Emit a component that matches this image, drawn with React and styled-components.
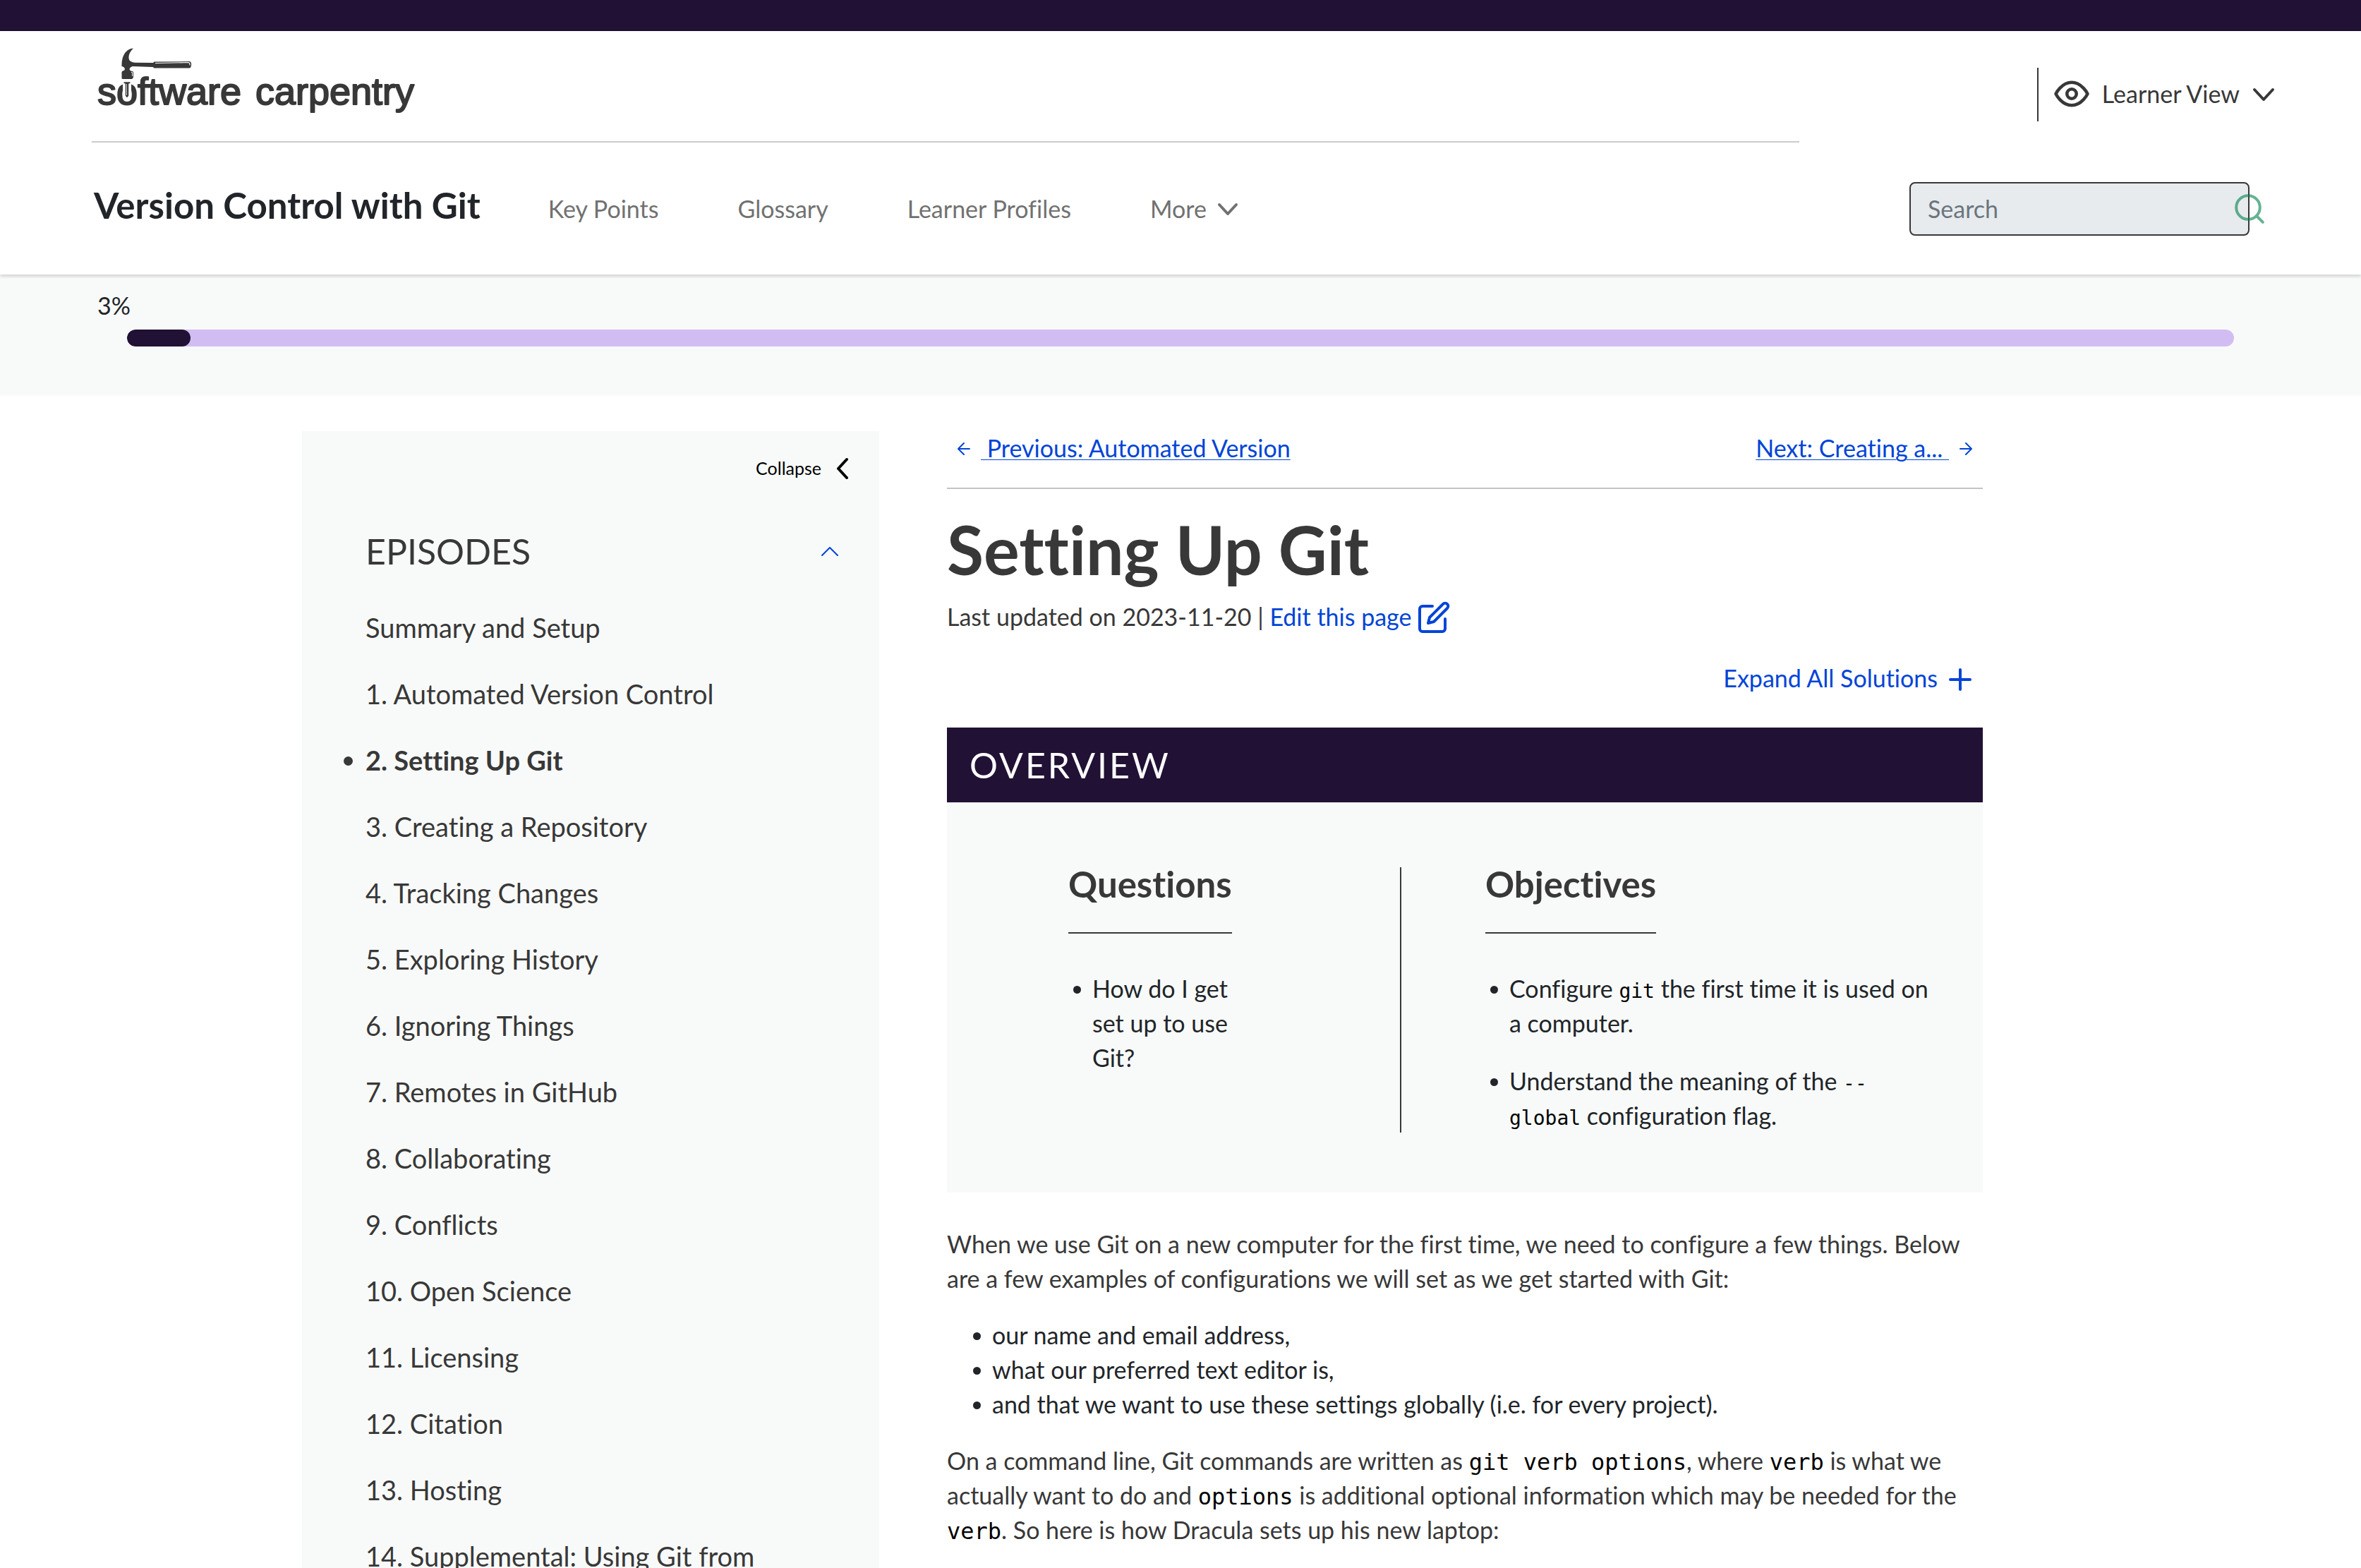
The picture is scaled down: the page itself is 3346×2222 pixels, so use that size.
import React from "react";
import styled, { createGlobalStyle } from "styled-components";

const INK = "#383838";
const TEXT = "#212529";
const NIGHT = "#211134";
const LINK = "#0044d7";
const MIST = "#f8faf9";

const GlobalStyle = createGlobalStyle`
  *, *::before, *::after { box-sizing: border-box; }
  body {
    margin: 0;
    background: #fff;
    color: ${INK};
    font-family: Lato, "Open Sans", "Liberation Sans", sans-serif;
    font-size: 34px;
    font-variant-ligatures: none;
    line-height: 48px;
  }
  h1, h2, h3, p, ul { margin: 0; padding: 0; }
  button, input { font: inherit; color: inherit; }
  svg { display: block; flex: none; }
`;

const Page = styled.div`
  overflow-x: hidden;
`;

const TopStripe = styled.div`
  height: 44px;
  background: ${NIGHT};
`;

const Header = styled.header`
  position: relative;
  background: #fff;
  box-shadow: 0 3px 4px rgba(0, 0, 0, 0.14);
`;

const BrandRow = styled.div`
  display: flex;
  padding-left: 130px;
`;

const BrandCell = styled.div`
  flex: 1;
  height: 158px;
  padding: 20px 0 0 6px;
  border-bottom: 2px solid #ccc;
`;

const ViewCell = styled.div`
  flex: 0 0 796px;
  display: flex;
  justify-content: flex-end;
  align-items: flex-start;
  padding: 52px 120px 0 0;
`;

const ViewButton = styled.button`
  display: flex;
  align-items: center;
  height: 76px;
  padding: 0 0 2px 20px;
  gap: 16px;
  border: 0;
  border-left: 2px solid ${INK};
  background: none;
`;

const NavRow = styled.div`
  display: flex;
  align-items: center;
  height: 187px;
  padding: 0 158px 0 133px;
`;

const LessonTitle = styled.a`
  padding-bottom: 10px;
  color: ${TEXT};
  font-size: 51px;
  font-weight: 700;
  line-height: 58px;
  text-decoration: none;
  white-space: nowrap;
`;

const NavLinks = styled.nav`
  display: flex;
  align-items: center;
  gap: 112px;
  margin-left: 96px;
  color: #717171;
`;

const NavLink = styled.a`
  color: inherit;
  text-decoration: none;
  white-space: nowrap;
`;

const NavButton = styled.button`
  display: flex;
  align-items: center;
  gap: 14px;
  padding: 0;
  border: 0;
  background: none;
`;

const SearchForm = styled.form`
  position: relative;
  margin-left: auto;
`;

const SearchBox = styled.input`
  display: block;
  width: 482px;
  height: 76px;
  padding: 0 24px;
  border: 2px solid ${INK};
  border-radius: 8px;
  background: #e7ebee;
  &::placeholder { color: #6c757d; opacity: 1; }
`;

const SearchButton = styled.button`
  position: absolute;
  top: 14px;
  right: -24px;
  padding: 0;
  border: 0;
  background: none;
  color: #00804c;
  opacity: 0.6;
`;

const ProgressArea = styled.section`
  padding: 20px 180px 70px;
  background: ${MIST};
`;

const ProgressText = styled.div`
  margin: 0 0 10px -42px;
  color: ${TEXT};
`;

const ProgressTrack = styled.div`
  height: 24px;
  border-radius: 12px;
  background: #d2bdf2;
  overflow: hidden;
`;

const ProgressFill = styled.div`
  height: 100%;
  border-radius: 12px;
  background: ${NIGHT};
`;

const Body = styled.div`
  display: grid;
  grid-template-columns: 818fr 1468fr;
  gap: 96px;
  max-width: 2490px;
  margin: 0 auto;
  padding: 50px 108px 0 0;
`;

const Sidebar = styled.aside`
  padding: 34px 40px 60px 90px;
  background: ${MIST};
`;

const CollapseButton = styled.button`
  display: flex;
  align-items: center;
  gap: 20px;
  margin-left: auto;
  padding: 0 2px 0 0;
  border: 0;
  background: none;
  color: #000;
  font-size: 25px;
  line-height: 36px;
`;

const EpisodesHead = styled.div`
  display: flex;
  align-items: center;
  justify-content: space-between;
  margin: 71px 0 56px;
  padding-right: 18px;
`;

const EpisodesTitle = styled.h2`
  font-size: 50px;
  font-weight: 400;
  line-height: 58px;
`;

const ToggleButton = styled.button`
  padding: 0;
  border: 0;
  background: none;
  color: ${LINK};
`;

const EpisodeList = styled.ul`
  display: flex;
  flex-direction: column;
  gap: 48px;
  list-style: none;
  font-size: 38px;
  line-height: 46px;
`;

const Episode = styled.li`
  position: relative;
  max-width: 600px;
  font-weight: ${(p) => (p.$current ? 700 : 400)};
  &::before {
    content: "";
    display: ${(p) => (p.$current ? "block" : "none")};
    position: absolute;
    left: -31px;
    top: 18px;
    width: 13px;
    height: 13px;
    border-radius: 50%;
    background: ${INK};
  }
`;

const EpisodeLink = styled.a`
  color: inherit;
  text-decoration: none;
`;

const Pager = styled.nav`
  display: flex;
  justify-content: space-between;
  padding: 0 14px 32px;
  border-bottom: 2px solid #c4c4c4;
`;

const PagerLink = styled.a`
  display: flex;
  align-items: center;
  gap: 14px;
  color: ${LINK};
  text-decoration: none;
`;

const PagerText = styled.span`
  white-space: pre;
  text-decoration: underline;
  text-decoration-thickness: 1px;
  text-underline-offset: 3px;
`;

const Title = styled.h1`
  margin-top: 31px;
  font-size: 95px;
  font-weight: 700;
  line-height: 108px;
`;

const Updated = styled.div`
  display: flex;
  margin-top: 18px;
  white-space: pre;
`;

const EditLink = styled.a`
  display: flex;
  align-items: center;
  gap: 8px;
  color: ${LINK};
  text-decoration: none;
`;

const ExpandButton = styled.button`
  display: flex;
  align-items: center;
  gap: 12px;
  margin: 39px 0 46px auto;
  padding: 0 12px 0 0;
  border: 0;
  background: none;
  color: ${LINK};
`;

const Overview = styled.section`
  background: ${MIST};
`;

const OverviewHead = styled.h2`
  padding: 24px 32px;
  background: ${NIGHT};
  color: #fff;
  font-size: 50px;
  font-weight: 400;
  line-height: 58px;
  letter-spacing: 3px;
`;

const OverviewGrid = styled.div`
  display: grid;
  grid-template-columns: 642fr 826fr;
  padding: 92px 0 85px;
  color: ${TEXT};
`;

const Column = styled.div`
  padding: ${(p) => (p.$divided ? "0 70px 0 119px" : "0 200px 0 172px")};
  border-left: ${(p) => (p.$divided ? `2px solid ${INK}` : "0")};
`;

const ColumnTitle = styled.h3`
  width: fit-content;
  margin-bottom: 53px;
  padding-bottom: 44px;
  border-bottom: 2px solid ${INK};
  color: ${INK};
  font-size: 51px;
  font-weight: 700;
  line-height: 48px;
`;

const Bullets = styled.ul`
  display: flex;
  flex-direction: column;
  gap: ${(p) => p.$gap}px;
  padding-left: ${(p) => p.$indent}px;
  color: ${TEXT};
  line-height: 49px;
  list-style: none;
`;

const Bullet = styled.li`
  position: relative;
  &::before {
    content: "";
    position: absolute;
    left: -27px;
    top: 21px;
    width: 11px;
    height: 11px;
    border-radius: 50%;
    background: ${TEXT};
  }
`;

const Code = styled.code`
  color: #000;
  font-family: "DejaVu Sans Mono", monospace;
  font-size: ${(p) => (p.$small ? 28 : 32)}px;
  line-height: 1;
`;

const Prose = styled.div`
  display: flex;
  flex-direction: column;
  gap: 31px;
  padding-top: 48px;
  line-height: 49px;
`;

const Logo = () => (
  <svg width="470" height="110" viewBox="0 0 470 110" role="img" aria-label="software carpentry" fill={INK}>
    <path d="M53 4.500C48 4.500 43 8 40.500 12C37.500 17 36.500 22 36.500 30L38.500 30.500Q41 32 41 34Q40.500 36 38 36.500Q36.500 37 36.500 38.500V46.500Q36.500 48 38 48H50.500Q53 47.500 53 45V38.500Q53 37 51.500 37Q48 36.500 47.500 34Q48 31 52 30L81 31L82 32.500H132.500Q134 32.500 134.500 30.500Q135.500 28 135 25.500Q134.500 23 132.500 23L82.500 23.500L81 25L56 24.800Q50 24.500 47.500 21.500C45 17 47 10 53 4.500Z" />
    <path d="M84 25.500L131 24.500Q133.500 25 133 28.500" fill="none" stroke="#fff" strokeWidth="1.200" />
    <path d="M50 38.500H51.500V44" fill="none" stroke="#fff" strokeWidth="1" />
    <g fontFamily="Liberation Sans, Arial, sans-serif" fontSize="54" stroke={INK} strokeWidth="2" strokeLinejoin="round">
      <text y="84">
        <tspan x="2">software</tspan>
        <tspan x="226">carpentry</tspan>
      </text>
    </g>
    <path d="M38 50h12v14h-12z" fill="#fff" />
    <path d="M40 60h8v14h-8z" fill="#fff" />
    <path d="M39.500 52.200h9v1.500l-2.300 1v17l-2.200 2.500-2.200-2.500v-17l-2.300-1z" />
    <path d="M43.500 55v16" stroke="#fff" strokeWidth="0.800" />
  </svg>
);

const Stroke = ({ w, h, box, width = 2, d, children }) => (
  <svg width={w} height={h} viewBox={box} fill="none" stroke="currentColor" strokeWidth={width} strokeLinecap="round" strokeLinejoin="round" aria-hidden="true">
    {d && <path d={d} />}
    {children}
  </svg>
);

const episodes = [
  "Summary and Setup",
  "1. Automated Version Control",
  "2. Setting Up Git",
  "3. Creating a Repository",
  "4. Tracking Changes",
  "5. Exploring History",
  "6. Ignoring Things",
  "7. Remotes in GitHub",
  "8. Collaborating",
  "9. Conflicts",
  "10. Open Science",
  "11. Licensing",
  "12. Citation",
  "13. Hosting",
  "14. Supplemental: Using Git from",
];

const progress = 3;

export default function App() {
  return (
    <Page>
      <GlobalStyle />
      <TopStripe />
      <Header>
        <BrandRow>
          <BrandCell>
            <Logo />
          </BrandCell>
          <ViewCell>
            <ViewButton type="button">
              <Stroke w={54} h={54} box="0 0 24 24">
                <path d="M2 12s3.500-7.200 10-7.200S22 12 22 12s-3.500 7.200-10 7.200S2 12 2 12z" />
                <circle cx="12" cy="12" r="3" />
              </Stroke>
              Learner View
              <Stroke w={36} h={22} box="0 0 36 22" width={4} d="M5 5l13 14L31 5" />
            </ViewButton>
          </ViewCell>
        </BrandRow>
        <NavRow>
          <LessonTitle href="#home">Version Control with Git</LessonTitle>
          <NavLinks>
            <NavLink href="#key-points">Key Points</NavLink>
            <NavLink href="#glossary">Glossary</NavLink>
            <NavLink href="#profiles">Learner Profiles</NavLink>
            <NavButton type="button">
              More
              <Stroke w={32} h={20} box="0 0 32 20" width={4} d="M4 4l12 13L28 4" />
            </NavButton>
          </NavLinks>
          <SearchForm role="search">
            <SearchBox type="text" placeholder="Search" aria-label="Search" />
            <SearchButton type="button" aria-label="Submit search">
              <Stroke w={48} h={48} box="0 0 24 24">
                <circle cx="11" cy="11" r="8.400" />
                <path d="M17 17l4.400 4.400" />
              </Stroke>
            </SearchButton>
          </SearchForm>
        </NavRow>
      </Header>

      <ProgressArea>
        <ProgressText id="progress-label">{progress}%</ProgressText>
        <ProgressTrack role="progressbar" aria-labelledby="progress-label" aria-valuenow={progress} aria-valuemin={0} aria-valuemax={100}>
          <ProgressFill style={{ width: `${progress}%` }} />
        </ProgressTrack>
      </ProgressArea>

      <Body>
        <Sidebar>
          <CollapseButton type="button">
            Collapse
            <Stroke w={20} h={32} box="0 0 20 32" width={4} d="M16 4L4 17l12 13" />
          </CollapseButton>
          <EpisodesHead>
            <EpisodesTitle>EPISODES</EpisodesTitle>
            <ToggleButton type="button" aria-label="Toggle episodes">
              <Stroke w={24} h={14} box="0 0 24 14" d="M1 13L12 2l11 11" />
            </ToggleButton>
          </EpisodesHead>
          <EpisodeList>
            {episodes.map((name, i) => (
              <Episode key={name} $current={i === 2}>
                <EpisodeLink href={`#episode-${i}`}>{name}</EpisodeLink>
              </Episode>
            ))}
          </EpisodeList>
        </Sidebar>

        <main>
          <Pager>
            <PagerLink href="#previous">
              <Stroke w={20} h={20} box="0 0 20 20" d="M18 11H2M10 3l-8 8 8 8" />
              <PagerText>{" Previous: Automated Version"}</PagerText>
            </PagerLink>
            <PagerLink href="#next">
              <PagerText>{"Next: Creating a... "}</PagerText>
              <Stroke w={20} h={20} box="0 0 20 20" d="M2 11h16M10 3l8 8-8 8" />
            </PagerLink>
          </Pager>

          <Title>Setting Up Git</Title>
          <Updated>
            {"Last updated on 2023-11-20 | "}
            <EditLink href="#edit">
              Edit this page
              <Stroke w={48} h={48} box="0 0 24 24">
                <path d="M11 4.500H4a2 2 0 0 0-2 2V20.500a2 2 0 0 0 2 2h14a2 2 0 0 0 2-2v-7" />
                <path d="M18.500 3a2.100 2.100 0 0 1 3 3L12 15.500l-4 1 1-4z" />
              </Stroke>
            </EditLink>
          </Updated>

          <ExpandButton type="button">
            Expand All Solutions
            <Stroke w={40} h={40} box="0 0 40 40" width={4} d="M20 8v28M6 22h28" />
          </ExpandButton>

          <Overview>
            <OverviewHead>OVERVIEW</OverviewHead>
            <OverviewGrid>
              <Column>
                <ColumnTitle>Questions</ColumnTitle>
                <Bullets $gap={33} $indent={34}>
                  <Bullet>How do I get set up to use Git?</Bullet>
                </Bullets>
              </Column>
              <Column $divided>
                <ColumnTitle>Objectives</ColumnTitle>
                <Bullets $gap={33} $indent={34}>
                  <Bullet>
                    Configure <Code $small>git</Code> the first time it is used on a computer.
                  </Bullet>
                  <Bullet>
                    Understand the meaning of the <Code $small>--<wbr />global</Code> configuration flag.
                  </Bullet>
                </Bullets>
              </Column>
            </OverviewGrid>
          </Overview>

          <Prose>
            <p>
              When we use Git on a new computer for the first time, we need to configure a few things. Below are a few
              examples of configurations we will set as we get started with Git:
            </p>
            <Bullets $gap={0} $indent={64}>
              <Bullet>our name and email address,</Bullet>
              <Bullet>what our preferred text editor is,</Bullet>
              <Bullet>and that we want to use these settings globally (i.e. for every project).</Bullet>
            </Bullets>
            <p>
              On a command line, Git commands are written as <Code>git verb options</Code>, where <Code>verb</Code> is
              what we actually want to do and <Code>options</Code> is additional optional information which may be
              needed for the <Code>verb</Code>. So here is how Dracula sets up his new laptop:
            </p>
          </Prose>
        </main>
      </Body>
    </Page>
  );
}
